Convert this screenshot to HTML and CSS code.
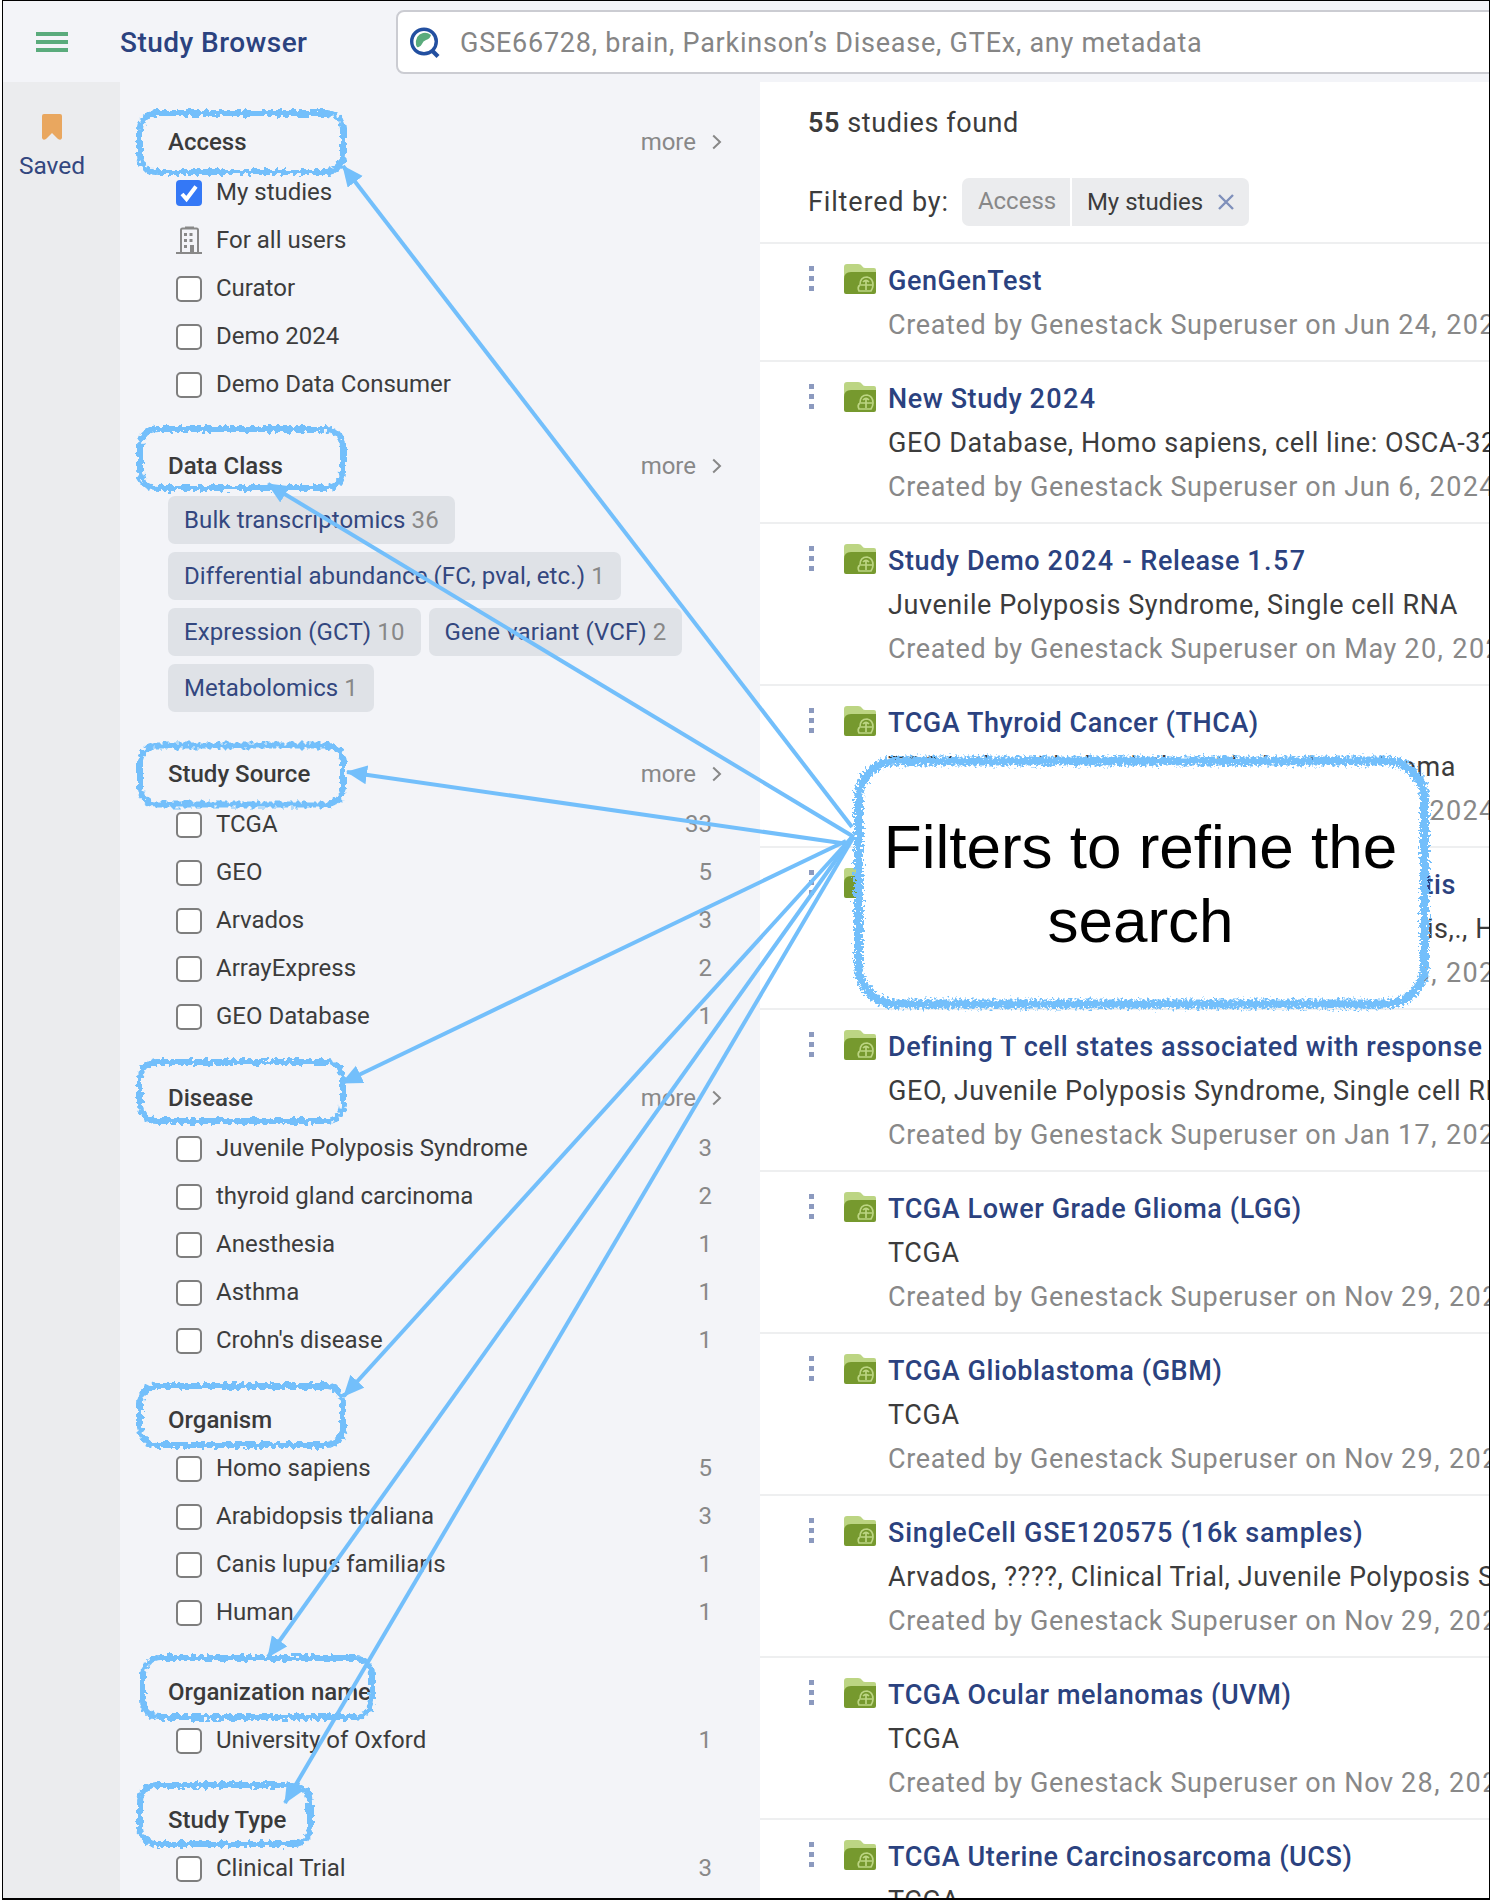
FILE: index.html
```html
<!DOCTYPE html>
<html lang="en">
<head>
<meta charset="utf-8">
<title>Study Browser</title>
<link rel="stylesheet" href="styles.css">
</head>
<body>
<svg class="defs" aria-hidden="true">
  <symbol id="folder" viewBox="0 0 32 30">
    <path d="M0 3q0-3 3-3h11q3 0 4 2t3 2h9q2 0 2 2v14H0z" fill="#bcd583"/>
    <path d="M0 15q0-7 7-7h25v20q0 2-2 2H2q-2 0-2-2z" fill="#76992e"/>
    <g fill="none" stroke="#bcd583" stroke-width="1.700"><path d="M15 27q-2-4 1-6 0-8 7-8 6 1 6 8 0 3-2 6z"/><path d="M17 21h11M22 17v9M19 18q3-3 6 0"/></g>
  </symbol>
  <symbol id="chevron" viewBox="0 0 10 16"><path d="M1.200 1.500 8 8l-6.800 6.500" fill="none" stroke="#888" stroke-width="2"/></symbol>
</svg>
<div class="app">
  <header class="topbar">
    <svg class="burger" viewBox="0 0 32 20"><path d="M0 2h32M0 10h32M0 18h32" stroke="#5aab7c" stroke-width="4"/></svg>
    <h1 class="brand">Study Browser</h1>
    <div class="search">
      <svg class="search-icon" viewBox="0 0 32 32">
        <circle cx="15" cy="14.500" r="12.300" fill="#fff" stroke="#224fa0" stroke-width="3.400"/>
        <path d="m22.500 23 6.500 6.500" stroke="#224fa0" stroke-width="4.200"/>
        <path d="M7 18q-1-10 7-12 4-1 8 2-1 4-5 5-3 1-4 4-2 4-5 3z" fill="#5aab7c"/>
      </svg>
      <span class="placeholder">GSE66728, brain, Parkinson’s Disease, GTEx, any metadata</span>
    </div>
  </header>
  <div class="body">
    <nav class="rail">
      <svg class="bookmark" viewBox="0 0 20 26"><path d="M0 2q0-2 2-2h16q2 0 2 2v22q-1 3-4 1l-6-6-6 6q-3 2-4-1z" fill="#e9a75f"/></svg>
      <span>Saved</span>
    </nav>
    <aside class="filters">
      <section>
        <h2 class="has-more">Access<span class="more">more <svg><use href="#chevron"/></svg></span></h2>
        <div class="row"><i class="box checked"><svg viewBox="0 0 26 26"><path d="m6 14 4.500 5L20 6.500" fill="none" stroke="#fff" stroke-width="4"/></svg></i><span>My studies</span></div>
        <div class="row"><svg class="building" viewBox="0 0 26 28"><path d="M9 1.500h9M5 27V4q0-1.500 1.500-1.500h14Q22 2.500 22 4v23M0 27h26" fill="none" stroke="#888" stroke-width="2"/><path d="M8 7h3v3H8zM13.500 7h3v3h-3zM8 13h3v3H8zM13.500 13h3v3h-3zM8 19h3v3H8zM14 19h4v8h-4z" fill="#888"/></svg><span>For all users</span></div>
        <div class="row"><i class="box"></i><span>Curator</span></div>
        <div class="row"><i class="box"></i><span>Demo 2024</span></div>
        <div class="row"><i class="box"></i><span>Demo Data Consumer</span></div>
      </section>
      <section>
        <h2 class="has-more">Data Class<span class="more">more <svg><use href="#chevron"/></svg></span></h2>
        <div class="tags">
          <span class="tag">Bulk transcriptomics <b>36</b></span>
          <span class="tag">Differential abundance (FC, pval, etc.) <b>1</b></span>
          <span class="tag">Expression (GCT) <b>10</b></span>
          <span class="tag">Gene variant (VCF) <b>2</b></span>
          <span class="tag">Metabolomics <b>1</b></span>
        </div>
      </section>
      <section>
        <h2 class="has-more">Study Source<span class="more">more <svg><use href="#chevron"/></svg></span></h2>
        <div class="row"><i class="box"></i><span>TCGA</span><b>33</b></div>
        <div class="row"><i class="box"></i><span>GEO</span><b>5</b></div>
        <div class="row"><i class="box"></i><span>Arvados</span><b>3</b></div>
        <div class="row"><i class="box"></i><span>ArrayExpress</span><b>2</b></div>
        <div class="row"><i class="box"></i><span>GEO Database</span><b>1</b></div>
      </section>
      <section>
        <h2 class="has-more">Disease<span class="more">more <svg><use href="#chevron"/></svg></span></h2>
        <div class="row"><i class="box"></i><span>Juvenile Polyposis Syndrome</span><b>3</b></div>
        <div class="row"><i class="box"></i><span>thyroid gland carcinoma</span><b>2</b></div>
        <div class="row"><i class="box"></i><span>Anesthesia</span><b>1</b></div>
        <div class="row"><i class="box"></i><span>Asthma</span><b>1</b></div>
        <div class="row"><i class="box"></i><span>Crohn's disease</span><b>1</b></div>
      </section>
      <section>
        <h2>Organism</h2>
        <div class="row"><i class="box"></i><span>Homo sapiens</span><b>5</b></div>
        <div class="row"><i class="box"></i><span>Arabidopsis thaliana</span><b>3</b></div>
        <div class="row"><i class="box"></i><span>Canis lupus familiaris</span><b>1</b></div>
        <div class="row"><i class="box"></i><span>Human</span><b>1</b></div>
      </section>
      <section>
        <h2>Organization name</h2>
        <div class="row"><i class="box"></i><span>University of Oxford</span><b>1</b></div>
      </section>
      <section>
        <h2>Study Type</h2>
        <div class="row"><i class="box"></i><span>Clinical Trial</span><b>3</b></div>
      </section>
    </aside>
    <main class="results">
      <p class="found"><strong>55</strong> studies found</p>
      <div class="filtered">Filtered by:
        <span class="chip"><span class="chip-key">Access</span><span class="chip-value">My studies<svg viewBox="0 0 16 16"><path d="m1 1 14 14M15 1 1 15" stroke="#7f90bb" stroke-width="2.400"/></svg></span></span>
      </div>
      <article><i class="dots"></i><svg class="folder"><use href="#folder"/></svg><div><h3>GenGenTest</h3><p class="by">Created by Genestack Superuser on Jun <time>24, 2024</time></p></div></article>
      <article><i class="dots"></i><svg class="folder"><use href="#folder"/></svg><div><h3>New Study <time>2024</time></h3><p>GEO Database, Homo sapiens, cell line: OSCA-32</p><p class="by">Created by Genestack Superuser on Jun <time>6, 2024</time></p></div></article>
      <article><i class="dots"></i><svg class="folder"><use href="#folder"/></svg><div><h3>Study Demo <time>2024 -</time> Release <time>1.57</time></h3><p>Juvenile Polyposis Syndrome, Single cell RNA</p><p class="by">Created by Genestack Superuser on May <time>20, 2024</time></p></div></article>
      <article><i class="dots"></i><svg class="folder"><use href="#folder"/></svg><div><h3>TCGA Thyroid Cancer (THCA)</h3><p class="spread">TCGA, thyroid gland, thyroid gland carcinoma</p><p class="by">Created by Genestack Superuser on Jan <time>8, 2024</time></p></div></article>
      <article><i class="dots"></i><svg class="folder"><use href="#folder"/></svg><div><h3 class="spread">Single cell analysis of ulcerative colitis</h3><p><span class="spread wide">GEO, Single cell RNA, ulcerative colitis,.,</span> Homo</p><p class="by">Created by Genestack Superuser on Jan <time>18, 2024</time></p></div></article>
      <article><i class="dots"></i><svg class="folder"><use href="#folder"/></svg><div><h3>Defining T cell states associated with response</h3><p>GEO, Juvenile Polyposis Syndrome, Single cell RNA</p><p class="by">Created by Genestack Superuser on Jan <time>17, 2024</time></p></div></article>
      <article><i class="dots"></i><svg class="folder"><use href="#folder"/></svg><div><h3>TCGA Lower Grade Glioma (LGG)</h3><p>TCGA</p><p class="by">Created by Genestack Superuser on Nov <time>29, 2023</time></p></div></article>
      <article><i class="dots"></i><svg class="folder"><use href="#folder"/></svg><div><h3>TCGA Glioblastoma (GBM)</h3><p>TCGA</p><p class="by">Created by Genestack Superuser on Nov <time>29, 2023</time></p></div></article>
      <article><i class="dots"></i><svg class="folder"><use href="#folder"/></svg><div><h3 class="digits">SingleCell GSE120575 (16k samples)</h3><p>Arvados, ????, Clinical Trial, Juvenile Polyposis Syndrome</p><p class="by">Created by Genestack Superuser on Nov <time>29, 2023</time></p></div></article>
      <article><i class="dots"></i><svg class="folder"><use href="#folder"/></svg><div><h3>TCGA Ocular melanomas (UVM)</h3><p>TCGA</p><p class="by">Created by Genestack Superuser on Nov <time>28, 2023</time></p></div></article>
      <article><i class="dots"></i><svg class="folder"><use href="#folder"/></svg><div><h3>TCGA Uterine Carcinosarcoma (UCS)</h3><p>TCGA</p></div></article>
    </main>
  </div>
  <svg class="annotations" viewBox="0 0 1490 1900">
    <defs>
      <filter id="crayon" filterUnits="userSpaceOnUse" x="0" y="0" width="1490" height="1900">
        <feTurbulence type="fractalNoise" baseFrequency="0.25" numOctaves="1" seed="4"/>
        <feDisplacementMap in="SourceGraphic" scale="10" xChannelSelector="R" yChannelSelector="G"/>
      </filter>
      <filter id="chalk" filterUnits="userSpaceOnUse" x="800" y="700" width="690" height="360">
        <feTurbulence type="fractalNoise" baseFrequency="0.4" numOctaves="3" seed="7"/>
        <feDisplacementMap in="SourceGraphic" scale="11" xChannelSelector="R" yChannelSelector="G"/>
      </filter>
      <marker id="head" markerUnits="userSpaceOnUse" markerWidth="22" markerHeight="20" refX="20" refY="9.500" orient="auto"><path d="M0 0 21 9.500 0 19z" fill="#73bffb"/></marker>
    </defs>
    <g class="outline">
      <rect x="140" y="113" width="203" height="59" rx="17"/>
      <rect x="140" y="429" width="203" height="59" rx="17"/>
      <rect x="140" y="745.500" width="203" height="59" rx="17"/>
      <rect x="140" y="1062" width="203" height="59" rx="17"/>
      <rect x="140" y="1386" width="203" height="59" rx="17"/>
      <rect x="143" y="1658" width="229" height="59" rx="17"/>
      <rect x="140" y="1785" width="170" height="59" rx="17"/>
    </g>
    <rect class="callout-box" x="858.500" y="761" width="566" height="243" rx="38"/>
    <g class="arrows">
      <path d="M852 827 343 166"/><path d="M854 837 268 484"/><path d="M848 844 347 772"/><path d="M846 841 342 1083"/><path d="M853 836 344 1396"/><path d="M853 836 268 1657"/><path d="M853 838 285 1803"/>
    </g>
  </svg>
  <p class="callout-text">Filters to refine the search</p>
  <div class="frame"></div>
</div>
</body>
</html>
```
FILE: styles.css
```css
* { box-sizing: border-box; }
body { margin: 0; background: #fff; }
h1, h2, h3, p { margin: 0; font-weight: 500; }
b, i { font-weight: 400; font-style: normal; }
svg { display: block; flex: none; }
.defs { position: absolute; width: 0; height: 0; }

.app {
  position: relative;
  width: 1490px;
  height: 1900px;
  padding-left: 2px;
  overflow: hidden;
  font-family: Roboto, "Liberation Sans", sans-serif;
  font-size: 24px;
  color: #3c3c3c;
  white-space: nowrap;
}

.topbar {
  display: flex;
  align-items: center;
  height: 82px;
  padding: 2px 0 0 34px;
  background: #f3f4f8;
}
.burger { width: 32px; height: 20px; }
.brand { width: 276px; margin-left: 52px; font-size: 28px; letter-spacing: 0.46px; color: #2b427f; }
.search {
  display: flex;
  align-items: center;
  flex: 1;
  height: 64px;
  margin-right: -12px;
  padding-left: 11px;
  background: #fff;
  border: 2px solid #cbccd2;
  border-radius: 8px;
}
.search-icon { width: 32px; height: 32px; margin-top: 2px; }
.placeholder { margin: 1px 0 0 19px; font-size: 27px; letter-spacing: 0.76px; color: #858585; }

.body { display: flex; height: 1818px; }
.rail {
  display: flex;
  flex-direction: column;
  align-items: center;
  flex: none;
  width: 118px;
  padding-top: 32px;
  padding-right: 18px;
  background: #ebecee;
  color: #33477f;
  font-size: 24.5px;
}
.rail span { margin-top: 11px; }
.bookmark { width: 20px; height: 26px; }

.filters {
  display: flex;
  flex-direction: column;
  gap: 32px;
  flex: none;
  width: 640px;
  padding: 34px 38px 0 48px;
  background: #f3f4f8;
}
.filters h2 {
  display: flex;
  align-items: center;
  justify-content: space-between;
  height: 48px;
  font-size: 24px;
  color: #3a3a3a;
}
.filters h2.has-more { height: 52px; }
.more { display: flex; align-items: center; gap: 16px; font-weight: 400; color: #888; }
.more svg { width: 10px; height: 16px; }
.row { display: flex; align-items: center; gap: 14px; height: 48px; padding: 0 10px 0 8px; }
.row b { margin-left: auto; color: #888; }
.box {
  flex: none;
  width: 26px;
  height: 26px;
  margin-top: 2px;
  background: #fff;
  border: 2px solid #7e7e7e;
  border-radius: 5px;
}
.box.checked { background: #3478f6; border: 0; border-radius: 4px; }
.building { width: 26px; height: 28px; }

.tags { display: flex; flex-wrap: wrap; gap: 8px; margin: 4px 0; }
.tag {
  height: 48px;
  padding: 0 16px;
  line-height: 48px;
  border-radius: 7px;
  background: #dfe2e7;
  color: #33477f;
  letter-spacing: 0.1px;
}
.tag b { color: #888; }

.results { flex: 1; min-width: 0; overflow: hidden; background: #fff; font-size: 27px; letter-spacing: 0.57px; }
.found { height: 80px; padding-left: 48px; line-height: 82px; font-weight: 400; }
.found strong { font-weight: 600; }
.filtered { display: flex; align-items: center; gap: 13px; height: 80px; padding-left: 48px; letter-spacing: 0.85px; }
.chip { display: flex; gap: 2px; height: 48px; font-size: 24px; line-height: 46px; letter-spacing: 0; }
.chip-key { width: 108px; padding-left: 16px; background: #ebecee; border-radius: 7px 0 0 7px; color: #888; }
.chip-value { display: flex; align-items: center; justify-content: space-between; width: 177px; padding: 0 15px; background: #ebecee; border-radius: 0 7px 7px 0; }
.chip-value svg { width: 16px; height: 16px; }

article { display: flex; padding: 15px 0 13px 48px; border-top: 2px solid #eeeff0; }
article > div { flex: none; }
article p, article h3 { height: 44px; line-height: 44px; font-size: 27px; }
article p { font-weight: 400; }
article h3 { color: #2b427f; }
article .by { color: #888; letter-spacing: 0.64px; }
article time { letter-spacing: 1.4px; }
article .digits { letter-spacing: 0.78px; }
.spread { width: 568px; text-align-last: justify; }
.spread.wide { display: inline-block; width: 580px; }
.dots {
  flex: none;
  width: 5px;
  height: 25px;
  margin: 7px 31px 0 1px;
  background: repeating-linear-gradient(#8c9abf 0 5px, transparent 5px 10px);
}
.folder { width: 32px; height: 30px; margin: 5px 12px 0 -1px; }

.annotations { position: absolute; inset: 0; width: 1490px; height: 1900px; }
.outline { fill: none; stroke: #73bffb; stroke-width: 6px; filter: url(#crayon); }
.callout-box { fill: #fff; stroke: #73bffb; stroke-width: 9px; filter: url(#chalk); }
.arrows { fill: none; stroke: #73bffb; stroke-width: 4px; }
.arrows path { marker-end: url(#head); }
.callout-text {
  position: absolute;
  left: 858px;
  top: 810px;
  width: 565px;
  font: 400 62px/74px "Liberation Sans", Arial, sans-serif;
  color: #000;
  text-align: center;
  white-space: normal;
}
.frame { position: absolute; inset: 0 0 0 2px; border: solid #000; border-width: 1px 1px 2px 1px; }
```
